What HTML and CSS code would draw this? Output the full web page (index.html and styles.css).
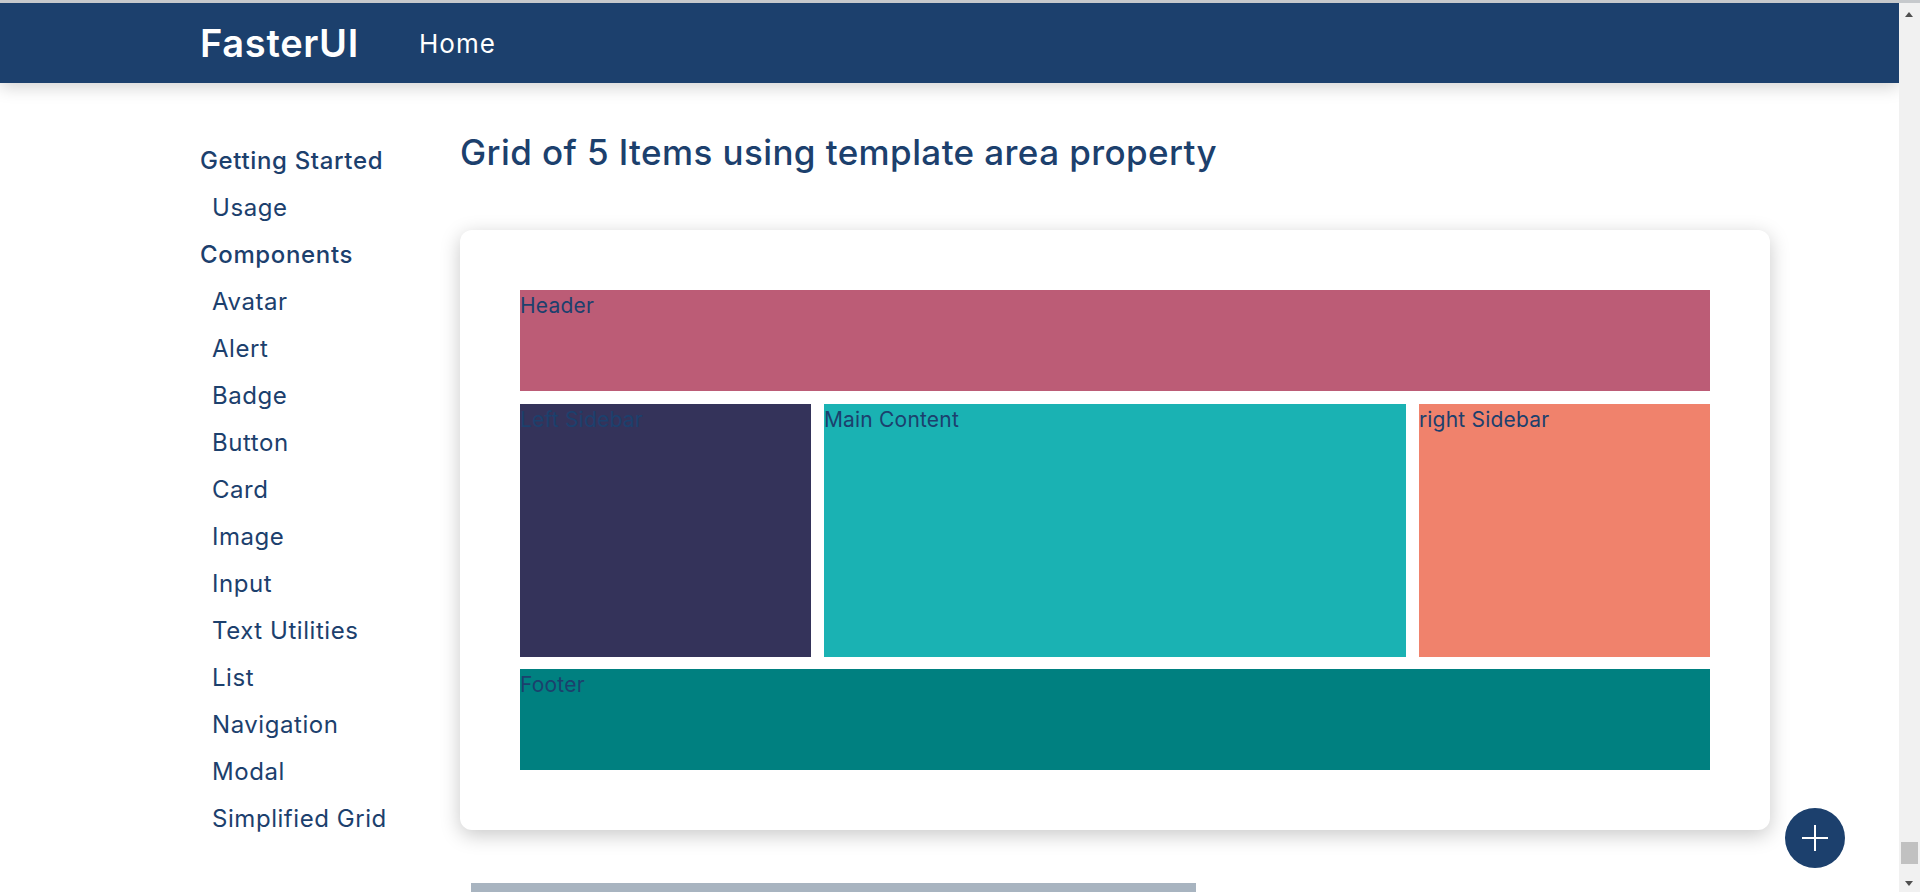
FILE: index.html
```html
<!DOCTYPE html>
<html>
    <head>
        <meta charset="UTF-8">
        <title>FasterUI</title>
        <link rel="stylesheet" href="styles.css">
    </head>
    <body>
        <div class="window">
            <div class="page">
                <header class="navbar">
                    <a class="brand">FasterUI</a>
                    <a class="nav-link">Home</a>
                </header>

                <div class="layout">
                    <aside class="sidebar">
                        <h3 class="side-title">Getting Started</h3>
                        <a class="side-link">Usage</a>
                        <h3 class="side-title">Components</h3>
                        <a class="side-link">Avatar</a>
                        <a class="side-link">Alert</a>
                        <a class="side-link">Badge</a>
                        <a class="side-link">Button</a>
                        <a class="side-link">Card</a>
                        <a class="side-link">Image</a>
                        <a class="side-link">Input</a>
                        <a class="side-link">Text Utilities</a>
                        <a class="side-link">List</a>
                        <a class="side-link">Navigation</a>
                        <a class="side-link">Modal</a>
                        <a class="side-link">Simplified Grid</a>
                    </aside>

                    <main class="content">
                        <h2 class="heading">Grid of 5 Items using template area property</h2>
                        <section class="card">
                            <div class="grid-demo">
                                <div class="area-header">Header</div>
                                <div class="area-left">Left Sidebar</div>
                                <div class="area-main">Main Content</div>
                                <div class="area-right">right Sidebar</div>
                                <div class="area-footer">Footer</div>
                            </div>
                        </section>
                        <div class="code-block"></div>
                    </main>
                </div>
            </div>

            <div class="scrollbar">
                <span class="arrow-up"></span>
                <span class="thumb"></span>
                <span class="arrow-down"></span>
            </div>
        </div>

        <button class="fab" aria-label="Add">
            <svg width="26" height="26" viewBox="0 0 26 26">
                <path d="M0 13H26M13 0V26" stroke="#fff" stroke-width="2" fill="none"/>
            </svg>
        </button>
    </body>
</html>
```

FILE: styles.css
```css
* {
    box-sizing: border-box;
}

html, body {
    margin: 0;
    height: 892px;
    overflow: hidden;
}

body {
    font-family: Inter, "Open Sans", sans-serif;
    color: #1c406d;
    background-color: #fff;
}

.window {
    display: flex;
    height: 892px;
    border-top: 3px solid #c6c9cc;
}

.page {
    flex: 1;
    min-width: 0;
    overflow: hidden;
}

/* navbar */
.navbar {
    display: flex;
    align-items: center;
    height: 80px;
    padding-left: 200px;
    background-color: #1c406d;
    box-shadow: 0 4px 16px rgba(0, 0, 0, 0.18);
    color: #fff;
}

.brand {
    font-size: 38px;
    font-weight: 600;
    letter-spacing: 0.7px;
}

.nav-link {
    margin-left: 60px;
    font-size: 26px;
    letter-spacing: 1px;
}

/* sidebar + content */
.layout {
    display: flex;
    padding-left: 200px;
}

.sidebar {
    width: 260px;
    padding-top: 54px;
    flex-shrink: 0;
}

.side-title {
    margin: 0;
    font-size: 24px;
    font-weight: 500;
    letter-spacing: 0.65px;
    line-height: 47px;
}

.side-link {
    display: block;
    padding-left: 12px;
    font-size: 24px;
    letter-spacing: 0.55px;
    line-height: 47px;
}

.content {
    width: 1310px;
}

.heading {
    margin: 0;
    padding-top: 44px;
    font-size: 35px;
    font-weight: 500;
    letter-spacing: 0.4px;
    line-height: 50px;
}

.card {
    margin-top: 53.3px;
    height: 600px;
    padding: 60px;
    border-radius: 12px;
    background-color: #fff;
    box-shadow: 0 5px 20px rgba(0, 0, 0, 0.22);
}

.grid-demo {
    display: grid;
    height: 480px;
    grid-template-columns: 1fr 2fr 1fr;
    grid-template-rows: 1fr 2.5fr 1fr;
    grid-template-areas:
        "header header header"
        "left main right"
        "footer footer footer";
    gap: 12.8px;
    font-size: 21px;
    letter-spacing: 0.2px;
    line-height: 31px;
}

.area-header {
    grid-area: header;
    background-color: #bc5c76;
}

.area-left {
    grid-area: left;
    background-color: #34335a;
}

.area-main {
    grid-area: main;
    background-color: #1ab2b3;
}

.area-right {
    grid-area: right;
    background-color: #f0826c;
}

.area-footer {
    grid-area: footer;
    background-color: #008080;
}

.code-block {
    width: 725px;
    height: 100px;
    margin: 53px 0 0 11px;
    background-color: #a8b4c0;
}

/* fake scrollbar from the screenshot */
.scrollbar {
    position: relative;
    flex: 0 0 21px;
    background-color: #f1f1f1;
}

.arrow-up, .arrow-down {
    position: absolute;
    left: 6px;
    width: 0;
    height: 0;
    border-left: 4.5px solid transparent;
    border-right: 4.5px solid transparent;
}

.arrow-up {
    top: 9px;
    border-bottom: 5px solid #505050;
}

.arrow-down {
    bottom: 6px;
    border-top: 5px solid #505050;
}

.thumb {
    position: absolute;
    top: 839px;
    left: 2px;
    width: 17px;
    height: 22px;
    background-color: #c1c1c1;
}

.fab {
    position: fixed;
    left: 1785px;
    top: 808px;
    display: flex;
    align-items: center;
    justify-content: center;
    width: 60px;
    height: 60px;
    padding: 0;
    border: none;
    border-radius: 50%;
    background-color: #1c406d;
}
```
